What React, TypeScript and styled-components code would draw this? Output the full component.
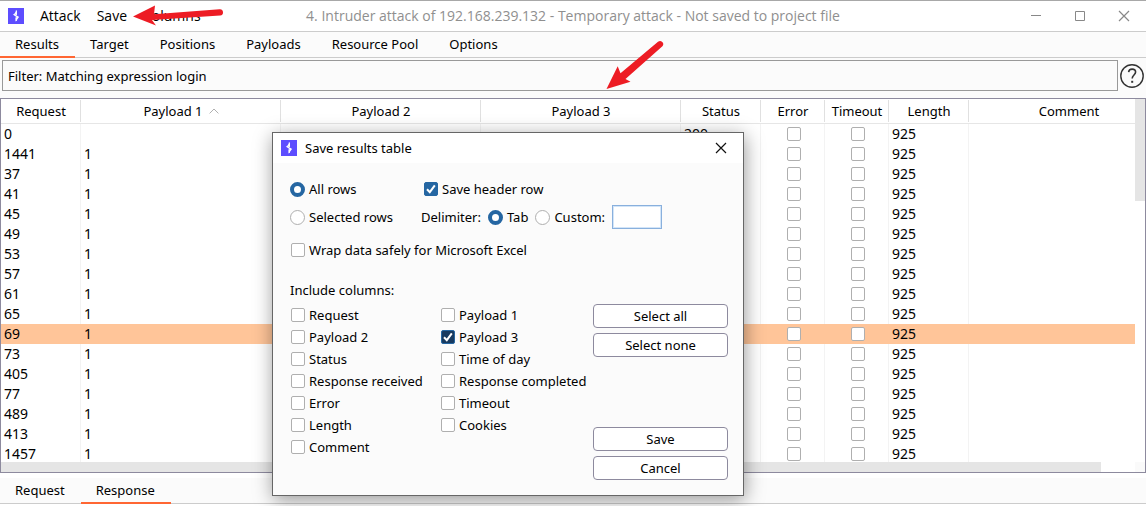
import React, { useState } from "react";
import styled, { createGlobalStyle } from "styled-components";

const GlobalStyle = createGlobalStyle`
  * { box-sizing: border-box; }
  body { margin: 0; background: #fff; }
  body, button, input { font: 13px/20px "Noto Sans", "Open Sans", sans-serif; color: #000; }
`;

const Window = styled.div`
  position: relative;
  display: flex;
  flex-direction: column;
  height: 100vh;
  overflow: hidden;
  border-top: 1px solid #a8a8a8;
  background: #fff;
`;

const TitleBar = styled.header`
  display: grid;
  grid-template-columns: 1fr auto 1fr;
  align-items: center;
  height: 31px;
  flex: none;
  border-bottom: 1px solid #ccc;
`;

const MenuBar = styled.nav`
  display: flex;
  align-items: center;
  gap: 16px;
  padding-left: 8px;
`;

const PlainButton = styled.button`
  padding: 0;
  border: 0;
  background: none;
  white-space: nowrap;
`;

const MenuButton = styled(PlainButton)`
  font-family: "Open Sans", sans-serif;
  font-size: 14px;
`;

const WindowTitle = styled.h1`
  margin: 0;
  font-family: "Open Sans", sans-serif;
  font-size: 14px;
  font-weight: 400;
  white-space: nowrap;
  color: #8f8f8f;
`;

const Controls = styled.div`
  display: flex;
  justify-content: flex-end;
  gap: 28px;
  padding-right: 14px;
`;

const IconButton = styled(PlainButton)`
  display: flex;
  align-items: center;
  justify-content: center;
  width: 16px;
  height: 16px;
`;

const TabBar = styled.div`
  display: flex;
  flex: none;
  height: 26px;
  border-bottom: 1px solid #ccc;
  background: #fbfbfb;
`;

const Tab = styled.button<{ $active?: boolean }>`
  height: 26px;
  padding: 0 16px 0 15px;
  border: 0;
  border-bottom: 2px solid ${(p) => (p.$active ? "#ff6633" : "transparent")};
  background: none;
  white-space: nowrap;
`;

const FilterRow = styled.div`
  display: flex;
  flex: none;
  align-items: center;
  gap: 2px;
  padding: 2px 2px 7px;
  background: #fbfbfb;
`;

const FilterButton = styled.button`
  flex: 1;
  height: 31px;
  padding: 0 5px;
  border: 1px solid #999;
  background: #fbfbfb;
  text-align: left;
`;

const HelpButton = styled(PlainButton)`
  display: flex;
`;

const TableFrame = styled.div`
  display: grid;
  flex: 1;
  min-height: 0;
  grid-template: minmax(0, 1fr) 10px / minmax(0, 1fr) 10px;
  border: 1px solid #8d8a9e;
  background: #fff;
`;

const TableView = styled.div`
  overflow: hidden;
`;

const Track = styled.div`
  display: flex;
`;

const VThumb = styled.div`
  width: 10px;
  height: 28%;
  background: #e5e5e5;
`;

const HThumb = styled.div`
  width: 97%;
  height: 10px;
  background: #e5e5e5;
`;

const Corner = styled.div`
  background: #fafafa;
`;

const Table = styled.table`
  width: 100%;
  min-width: 1168px;
  table-layout: fixed;
  border-spacing: 0;
`;

const HeadCell = styled.th`
  height: 25px;
  padding: 0;
  border-bottom: 1px solid #e6e6e6;
  font-weight: 400;
  white-space: nowrap;
`;

const HeadLabel = styled.span`
  display: flex;
  align-items: center;
  justify-content: center;
  gap: 6px;
  height: 22px;
  padding-left: 1px;
  border-right: 1px solid #e0e0e0;
`;

const Row = styled.tr<{ $marked?: boolean }>`
  background: ${(p) => (p.$marked ? "#ffc599" : "#fff")};
`;

const Cell = styled.td<{ $marked?: boolean }>`
  height: 20px;
  padding: 0 3px;
  border-right: 1px solid ${(p) => (p.$marked ? "#ffc599" : "#f3f3f3")};
  font-size: 14px;
`;

const CellCheck = styled.span`
  display: flex;
  justify-content: center;
  padding-left: 2px;
`;

const BottomTabs = styled(TabBar)`
  margin: 5px 0 2px;
`;

const Dialog = styled.section`
  position: absolute;
  top: 131px;
  left: 272px;
  width: 472px;
  border: 1px solid #666;
  background: #fbfbfb;
  box-shadow: 1px 4px 18px rgba(0, 0, 0, 0.4);
`;

const DialogTitle = styled.header`
  display: flex;
  align-items: center;
  gap: 8px;
  height: 30px;
  padding: 0 14px 0 8px;
  background: #fff;
`;

const DialogHeading = styled.h2`
  flex: 1;
  margin: 0;
  font-size: 13px;
  font-weight: 400;
`;

const DialogBody = styled.form`
  padding: 14px 15px 15px 17px;
`;

const OptionRow = styled.div`
  display: grid;
  grid-template-columns: 131px 1fr;
  align-items: center;
  height: 24px;
  margin-bottom: 4px;
`;

const Inline = styled.div<{ $indent?: boolean }>`
  display: flex;
  align-items: center;
  gap: 7px;
  padding-left: ${(p) => (p.$indent ? "2px" : "0")};
`;

const Choice = styled.label`
  display: flex;
  align-items: center;
  gap: 4px;
  height: 22px;
  white-space: nowrap;
`;

const WrapRow = styled.div`
  margin: 10px 0 19px;
`;

const Include = styled.fieldset`
  display: grid;
  grid-template-columns: 303px 1fr;
  margin: 0;
  padding: 0;
  border: 0;
`;

const Legend = styled.legend`
  margin-bottom: 4px;
  padding: 0;
`;

const ColumnGrid = styled.div`
  display: grid;
  grid-template-columns: 150px 1fr;
  align-content: start;
`;

const ButtonColumn = styled.div`
  display: flex;
  flex-direction: column;
  gap: 5px;
`;

const ActionButton = styled.button<{ $apart?: boolean }>`
  height: 24px;
  margin-top: ${(p) => (p.$apart ? "65px" : "0")};
  padding: 0;
  border: 1px solid #8d8a9e;
  border-radius: 4px;
  background: #fff;
`;

const CustomInput = styled.input`
  width: 50px;
  height: 24px;
  padding: 0 3px;
  border: 1px solid #89b0dd;
  outline: 0;
  background: #fff;
  box-shadow: inset 0 0 0 1px #d3e5f8;
`;

const BoxWrap = styled.span`
  display: grid;
  width: 15px;
  height: 15px;
  place-items: center;
  > * { grid-area: 1 / 1; }
  > svg { pointer-events: none; }
`;

const CheckInput = styled.input<{ $focus?: boolean }>`
  appearance: none;
  width: 14px;
  height: 14px;
  margin: 0;
  border: 1px solid #afafaf;
  border-radius: 2px;
  background: #fff;
  &:checked {
    border-color: #2566a2;
    background: ${(p) => (p.$focus ? "#173a60" : "#2566a2")};
  }
`;

const RadioInput = styled.input`
  appearance: none;
  width: 15px;
  height: 15px;
  margin: 0;
  border: 1px solid #afafaf;
  border-radius: 50%;
  background: #fff;
  &:checked { border: 4px solid #2566a2; }
`;

const Annotations = styled.svg`
  position: absolute;
  top: -1px;
  left: 0;
  pointer-events: none;
`;

function Check({ label, checked = false, focus = false }: { label: string; checked?: boolean; focus?: boolean }) {
  const [on, setOn] = useState(checked);
  return (
    <Choice>
      <BoxWrap>
        <CheckInput type="checkbox" $focus={focus} checked={on} onChange={() => setOn(!on)} />
        {on && (
          <svg width="14" height="14" viewBox="0 0 14 14">
            <path d="M3 7.2 5.8 10.2 10.8 3.4" fill="none" stroke="#fff" strokeWidth="2" />
          </svg>
        )}
      </BoxWrap>
      {label}
    </Choice>
  );
}

function Radio({ label, name, checked }: { label: string; name: string; checked?: boolean }) {
  return (
    <Choice>
      <RadioInput type="radio" name={name} defaultChecked={checked} />
      {label}
    </Choice>
  );
}

function Logo() {
  return (
    <svg width="16" height="16" viewBox="0 0 16 16">
      <path d="M0 0h16v16H0z" fill="#5d4dff" />
      <path d="M8.8 2.2V6.3L5.4 6.9zM7.7 13.8V9.700L11 9zM4.800 6.600 6.200 6 11.200 9 9.800 10z" fill="#fff" />
      <path d="M8.3 2.6V7M8.2 9.2V13" stroke="#fff" strokeWidth="1.2" />
    </svg>
  );
}

function CloseIcon({ color }: { color: string }) {
  return (
    <svg width="12" height="12" viewBox="0 0 12 12">
      <path d="m1 1 10 10M11 1 1 11" stroke={color} strokeWidth="1.2" />
    </svg>
  );
}

const columns = [
  { name: "Request", width: 80 },
  { name: "Payload 1", width: 200, sorted: true },
  { name: "Payload 2", width: 200 },
  { name: "Payload 3", width: 200 },
  { name: "Status", width: 80 },
  { name: "Error", width: 64 },
  { name: "Timeout", width: 64 },
  { name: "Length", width: 80 },
  { name: "Comment" },
];

const requests = ["0", "1441", "37", "41", "45", "49", "53", "57", "61", "65", "69", "73", "405", "77", "489", "413", "1457"];
const tabs = ["Results", "Target", "Positions", "Payloads", "Resource Pool", "Options"];
const fields = [
  "Request", "Payload 1", "Payload 2", "Payload 3", "Status", "Time of day", "Response received",
  "Response completed", "Error", "Timeout", "Length", "Cookies", "Comment",
];

export default function App() {
  return (
    <>
      <GlobalStyle />
      <Window>
        <TitleBar>
          <MenuBar>
            <Logo />
            <MenuButton>Attack</MenuButton>
            <MenuButton>Save</MenuButton>
            <MenuButton>Columns</MenuButton>
          </MenuBar>
          <WindowTitle>4. Intruder attack of 192.168.239.132 - Temporary attack - Not saved to project file</WindowTitle>
          <Controls>
            <IconButton aria-label="Minimize">
              <svg width="12" height="12"><path d="M1 5.5h10" stroke="#888" /></svg>
            </IconButton>
            <IconButton aria-label="Maximize">
              <svg width="12" height="12"><path d="M1.5 1.5h9v9h-9z" fill="none" stroke="#888" /></svg>
            </IconButton>
            <IconButton aria-label="Close"><CloseIcon color="#888" /></IconButton>
          </Controls>
        </TitleBar>

        <TabBar>
          {tabs.map((t) => <Tab key={t} $active={t === "Results"}>{t}</Tab>)}
        </TabBar>

        <FilterRow>
          <FilterButton>Filter: Matching expression login</FilterButton>
          <HelpButton aria-label="Help">
            <svg width="24" height="24" viewBox="0 0 24 24" fill="none" stroke="#333">
              <circle cx="12" cy="12" r="11.2" strokeWidth="1.4" />
              <path d="M8.6 8.2c.2-2 1.5-3.1 3.5-3.1 2.1 0 3.5 1.1 3.5 3 0 2.8-3.4 3.1-3.4 6.3" strokeWidth="1.6" />
              <path d="M12.2 16.8v2" strokeWidth="2" />
            </svg>
          </HelpButton>
        </FilterRow>

        <TableFrame>
          <TableView>
            <Table>
              <colgroup>
                {columns.map((c) => <col key={c.name} width={c.width} />)}
              </colgroup>
              <thead>
                <tr>
                  {columns.map((c) => (
                    <HeadCell key={c.name} scope="col">
                      <HeadLabel>
                        {c.name}
                        {c.sorted && (
                          <svg width="10" height="6" viewBox="0 0 10 6">
                            <path d="M.6 5.4 5 1l4.4 4.4" fill="none" stroke="#b0b0b0" />
                          </svg>
                        )}
                      </HeadLabel>
                    </HeadCell>
                  ))}
                </tr>
              </thead>
              <tbody>
                {requests.map((id, i) => {
                  const marked = id === "69";
                  return (
                    <Row key={id} $marked={marked}>
                      <Cell $marked={marked}>{id}</Cell>
                      <Cell $marked={marked}>{i > 0 ? "1" : ""}</Cell>
                      <Cell $marked={marked} />
                      <Cell $marked={marked} />
                      <Cell $marked={marked}>{i === 0 ? "200" : ""}</Cell>
                      <Cell $marked={marked}>
                        <CellCheck><CheckInput type="checkbox" aria-label="Error" /></CellCheck>
                      </Cell>
                      <Cell $marked={marked}>
                        <CellCheck><CheckInput type="checkbox" aria-label="Timeout" /></CellCheck>
                      </Cell>
                      <Cell $marked={marked}>925</Cell>
                      <Cell $marked={marked} />
                    </Row>
                  );
                })}
              </tbody>
            </Table>
          </TableView>
          <Track><VThumb /></Track>
          <Track><HThumb /></Track>
          <Corner />
        </TableFrame>

        <BottomTabs>
          <Tab>Request</Tab>
          <Tab $active>Response</Tab>
        </BottomTabs>

        <Dialog role="dialog" aria-labelledby="dialog-title">
          <DialogTitle>
            <Logo />
            <DialogHeading id="dialog-title">Save results table</DialogHeading>
            <IconButton aria-label="Close dialog"><CloseIcon color="#111" /></IconButton>
          </DialogTitle>
          <DialogBody onSubmit={(e) => e.preventDefault()}>
            <OptionRow>
              <Radio name="rows" label="All rows" checked />
              <Inline $indent>
                <Check label="Save header row" checked />
              </Inline>
            </OptionRow>
            <OptionRow>
              <Radio name="rows" label="Selected rows" />
              <Inline>
                <span>Delimiter:</span>
                <Radio name="delimiter" label="Tab" checked />
                <Radio name="delimiter" label="Custom:" />
                <CustomInput aria-label="Custom delimiter" />
              </Inline>
            </OptionRow>
            <WrapRow><Check label="Wrap data safely for Microsoft Excel" /></WrapRow>
            <Include>
              <Legend>Include columns:</Legend>
              <ColumnGrid>
                {fields.map((f) => <Check key={f} label={f} checked={f === "Payload 3"} focus={f === "Payload 3"} />)}
              </ColumnGrid>
              <ButtonColumn>
                <ActionButton type="button">Select all</ActionButton>
                <ActionButton type="button">Select none</ActionButton>
                <ActionButton type="submit" $apart>Save</ActionButton>
                <ActionButton type="button">Cancel</ActionButton>
              </ButtonColumn>
            </Include>
          </DialogBody>
        </Dialog>

        <Annotations width="700" height="100" viewBox="0 0 700 100" fill="#ed1c24" aria-hidden="true">
          <path d="M133 16.5 155 5.5l-1 8.7L219.5 9.2a3.2 3.2 0 0 1 .6 6.4L152 20l4 5.5z" />
          <path d="M606.5 89 617.7 66.3l2.800 7L658 41.700a3.200 3.200 0 0 1 4.400 4.600L625.500 79l5 2.700z" />
        </Annotations>
      </Window>
    </>
  );
}
